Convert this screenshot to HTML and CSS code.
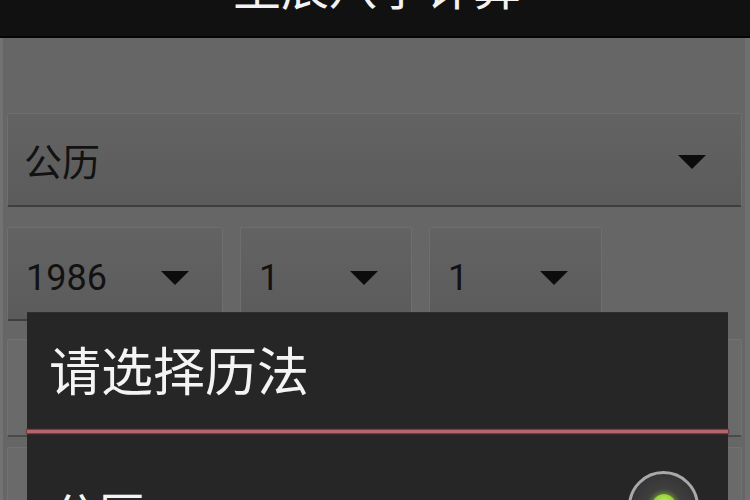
FILE: index.html
```html
<!DOCTYPE html>
<html lang="zh">
<head>
<meta charset="utf-8">
<title>请选择历法</title>
<link rel="stylesheet" href="styles.css">
</head>
<body>
<div class="screen">
  <header class="topbar"><div class="apptitle">生辰八字计算</div></header>
  <main class="content">
    <div class="spinner spinner-wide"><span class="value cjk">公历</span><span class="arrow"></span></div>
    <div class="row">
      <div class="spinner s-year"><span class="value">1986</span><span class="arrow"></span></div>
      <div class="spinner s-month"><span class="value">1</span><span class="arrow"></span></div>
      <div class="spinner s-day"><span class="value">1</span><span class="arrow"></span></div>
    </div>
    <div class="field field-a"></div>
    <div class="field field-b"></div>
  </main>
  <section class="dialog">
    <div class="dialog-title">请选择历法</div>
    <div class="divider"></div>
    <div class="option">
      <span class="option-label">公历</span>
      <span class="radio"><span class="dot"></span></span>
    </div>
  </section>
</div>
</body>
</html>
```
FILE: styles.css
```css
* { box-sizing: border-box; }
html, body { margin: 0; padding: 0; }
body {
  width: 750px;
  height: 500px;
  overflow: hidden;
  background: #656565;
  font-family: "Noto Sans CJK SC", "Noto Sans", sans-serif;
}
.screen {
  position: relative;
  width: 750px;
  height: 500px;
  overflow: hidden;
}
.topbar {
  height: 38px;
  background: #111111;
  border-bottom: 2px solid #050505;
  overflow: hidden;
  display: flex;
  justify-content: center;
}
.apptitle {
  color: #f2f2f2;
  font-size: 48px;
  line-height: 48px;
  margin-top: -40px;
  padding-left: 4px;
}
.content {
  height: 462px;
  padding: 75px 3px 0 4px;
  background: #666666;
  border-left: 3px solid #727272;
  border-right: 5px solid #707070;
  margin: 0;
}
.spinner {
  height: 94px;
  background: linear-gradient(#636363, #5b5b5b);
  border: 1px solid #6e6e6e;
  border-bottom: 2px solid #3e3e3e;
  border-radius: 2px;
  display: flex;
  align-items: center;
  justify-content: space-between;
  padding: 0 33px 0 18px;
  color: #121212;
}
.value {
  font-family: "Roboto", "Noto Sans", sans-serif;
  font-size: 36px;
  line-height: 1;
  margin-top: 8px;
}
.value.cjk {
  font-family: "Noto Sans CJK SC", sans-serif;
  font-size: 38px;
  margin-top: 0;
  margin-left: -2px;
}
.arrow {
  width: 0;
  height: 0;
  border-left: 14px solid transparent;
  border-right: 14px solid transparent;
  border-top: 14px solid #0c0c0c;
  margin-top: 8px;
}
.spinner-wide .arrow { margin-top: 5px; margin-right: 2px; }
.row {
  display: flex;
  gap: 17px;
  margin-top: 20px;
}
.s-year { width: 216px; }
.s-month { width: 172px; }
.s-day { width: 173px; }
.field {
  background: #6a6a6a;
  border: 1px solid #727272;
  border-bottom: 2px solid #4a4a4a;
  border-radius: 2px;
}
.field-a { height: 98px; margin-top: 18px; }
.field-b { height: 80px; margin-top: 10px; }
.dialog {
  position: absolute;
  left: 27px;
  top: 312px;
  width: 701px;
  height: 200px;
  background: #262626;
  border-top: 1px solid #2e2e2e;
}
.dialog-title {
  height: 117px;
  padding: 30px 0 0 22px;
  color: #f4f4f4;
  font-size: 52px;
  line-height: 52px;
  letter-spacing: 0;
}
.divider {
  height: 3px;
  background: #b4656d;
  box-shadow: 0 0 1px 1px #7a3a40;
}
.option {
  height: 142px;
  display: flex;
  align-items: center;
  justify-content: space-between;
  padding: 0 29px 0 25px;
}
.option-label {
  color: #f4f4f4;
  font-size: 46px;
  line-height: 46px;
  margin-top: 14px;
}
.radio {
  width: 71px;
  height: 71px;
  border-radius: 50%;
  border: 3px solid #a9a9a9;
  background: radial-gradient(circle, #4a4a4a 0, #3a3a3a 55%, #2c2c2c 100%);
  display: flex;
  align-items: center;
  justify-content: center;
  margin-top: 4px;
}
.dot {
  width: 24px;
  height: 24px;
  border-radius: 50%;
  background: radial-gradient(circle at 50% 40%, #c7f06a 0, #8ccc2c 60%, #5f9a18 100%);
  box-shadow: 0 0 4px 2px rgba(140, 204, 44, 0.45);
}
```
